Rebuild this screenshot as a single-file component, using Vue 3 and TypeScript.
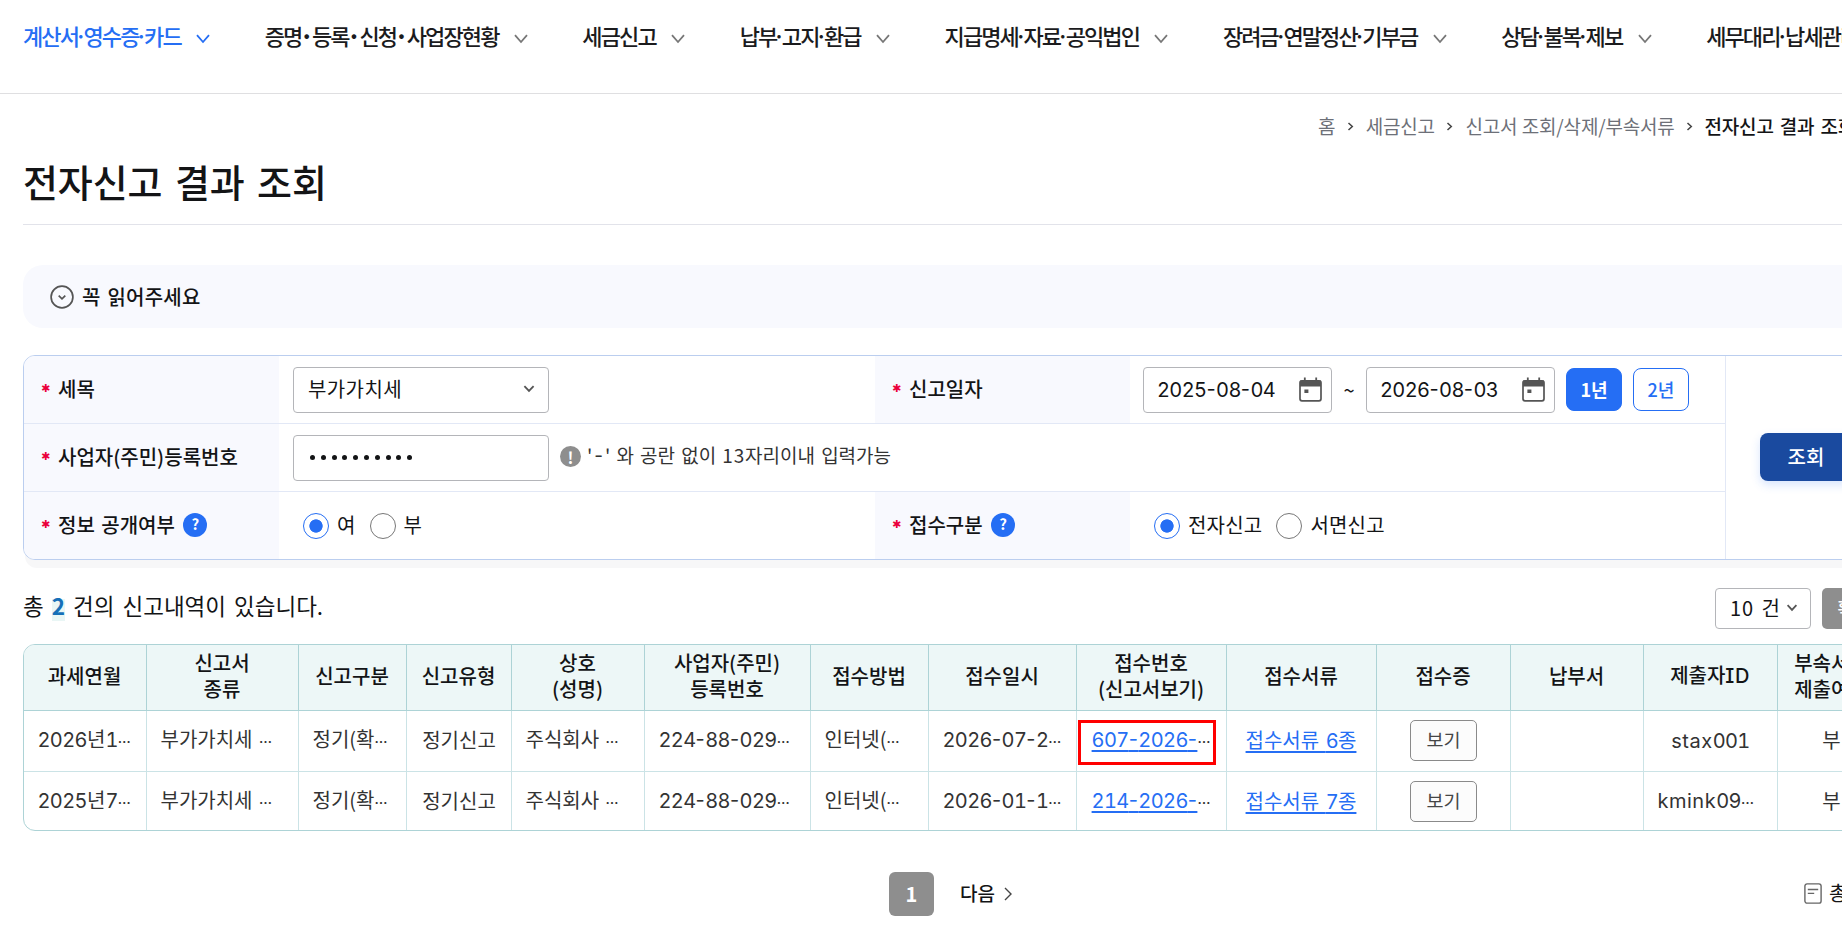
<script setup lang="ts">
import { h } from 'vue'

interface NavItem { label: string; active?: boolean; wide?: boolean }
interface Column { title: string[]; width: number }
interface Cell { text: string; kind?: 'link' | 'button' | 'left'; marked?: boolean }

/* Picks the class of one run of text: each kind has its own face and tracking. */
function runClass(run: string): string {
  if (run === '…') return 'run-more'
  if (run === '·') return 'run-dot'
  if (run === '-') return 'run-latin run-dash'
  if (/^[0-9]/.test(run)) return 'run-latin run-num'
  if (/^[A-Za-z]/.test(run)) return 'run-latin'
  return 'run-ko'
}

const Mixed = (props: { text: string }) =>
  (props.text.match(/…|·|-|[0-9]+|[A-Za-z]+|[^…·0-9A-Za-z\-]+/g) ?? []).map((run) =>
    h('span', { class: runClass(run) }, run),
  )
Mixed.props = ['text']

const nav: NavItem[] = [
  { label: '계산서·영수증·카드', active: true },
  { label: '증명·등록·신청·사업장현황', wide: true },
  { label: '세금신고' },
  { label: '납부·고지·환급' },
  { label: '지급명세·자료·공익법인' },
  { label: '장려금·연말정산·기부금' },
  { label: '상담·불복·제보' },
  { label: '세무대리·납세관리' },
]

const crumbs = ['홈', '세금신고', '신고서 조회/삭제/부속서류', '전자신고 결과 조회']

const columns: Column[] = [
  { title: ['과세연월'], width: 123 },
  { title: ['신고서', '종류'], width: 152 },
  { title: ['신고구분'], width: 108 },
  { title: ['신고유형'], width: 105 },
  { title: ['상호', '(성명)'], width: 133 },
  { title: ['사업자(주민)', '등록번호'], width: 166 },
  { title: ['접수방법'], width: 118 },
  { title: ['접수일시'], width: 148 },
  { title: ['접수번호', '(신고서보기)'], width: 150 },
  { title: ['접수서류'], width: 150 },
  { title: ['접수증'], width: 134 },
  { title: ['납부서'], width: 133 },
  { title: ['제출자ID'], width: 134 },
  { title: ['부속서류', '제출여부'], width: 108 },
]

const rows: Cell[][] = [
  [
    { text: '2026년1…', kind: 'left' }, { text: '부가가치세 …', kind: 'left' }, { text: '정기(확…', kind: 'left' },
    { text: '정기신고' }, { text: '주식회사 …', kind: 'left' }, { text: '224-88-029…', kind: 'left' },
    { text: '인터넷(…', kind: 'left' }, { text: '2026-07-2…', kind: 'left' },
    { text: '607-2026-…', kind: 'link', marked: true }, { text: '접수서류 6종', kind: 'link' },
    { text: '보기', kind: 'button' }, { text: '' }, { text: 'stax001' }, { text: '부' },
  ],
  [
    { text: '2025년7…', kind: 'left' }, { text: '부가가치세 …', kind: 'left' }, { text: '정기(확…', kind: 'left' },
    { text: '정기신고' }, { text: '주식회사 …', kind: 'left' }, { text: '224-88-029…', kind: 'left' },
    { text: '인터넷(…', kind: 'left' }, { text: '2026-01-1…', kind: 'left' },
    { text: '214-2026-…', kind: 'link' }, { text: '접수서류 7종', kind: 'link' },
    { text: '보기', kind: 'button' }, { text: '' }, { text: 'kmink09…', kind: 'left' }, { text: '부' },
  ],
]

const gridColumns = columns.map((c) => `${c.width}px`).join(' ')
const dates = ['2025-08-04', '2026-08-03']
</script>

<template>
  <div class="page">
    <nav class="gnb">
      <a v-for="item in nav" :key="item.label" class="gnb-item" :class="{ active: item.active, wide: item.wide }">
        <span class="gnb-label"><Mixed :text="item.label" /></span>
        <svg class="gnb-chev" width="14" height="10" viewBox="0 0 14 10"><path d="M1 1.2 7 8 13 1.2" /></svg>
      </a>
    </nav>

    <main class="content">
      <div class="crumbs">
        <template v-for="(crumb, i) in crumbs" :key="crumb">
          <svg v-if="i > 0" class="crumb-chev" width="7" height="9" viewBox="0 0 7 9"><path d="M1.5 1 5.3 4.5 1.5 8" /></svg>
          <span :class="{ current: i === crumbs.length - 1 }">{{ crumb }}</span>
        </template>
      </div>
      <h1>전자신고 결과 조회</h1>

      <section class="notice">
        <svg width="24" height="24" viewBox="0 0 24 24"><circle cx="12" cy="12" r="10.9" /><path d="M8.7 10.6 12 13.8 15.3 10.6" /></svg>
        <strong>꼭 읽어주세요</strong>
      </section>

      <section class="panel">
        <div class="fields">
          <div class="row">
            <div class="label"><i>✱</i>세목</div>
            <div class="value">
              <div class="box wide-box">부가가치세<svg class="select-chev" width="12" height="8" viewBox="0 0 12 8"><path d="M1.4 1.2 6 5.9 10.6 1.2" /></svg></div>
            </div>
            <div class="label"><i>✱</i>신고일자</div>
            <div class="value">
              <template v-for="(date, i) in dates" :key="date">
                <span v-if="i > 0" class="tilde">~</span>
                <div class="box date-box">
                  <span><Mixed :text="date" /></span>
                  <svg width="23" height="25" viewBox="0 0 23 25">
                    <path class="cal-pins" d="M5.8 0.5V5M17.2 0.5V5" />
                    <rect class="cal-frame" x="1" y="3.8" width="21" height="20" rx="2" />
                    <path class="cal-fill" d="M1 3.5h21v6H1zM5.4 12.4h4v3.6h-4z" />
                  </svg>
                </div>
              </template>
              <button class="year on">1년</button>
              <button class="year">2년</button>
            </div>
          </div>
          <div class="row single">
            <div class="label"><i>✱</i>사업자(주민)등록번호</div>
            <div class="value">
              <div class="box wide-box dots"><b v-for="n in 10" :key="n"></b></div>
              <span class="info">!</span>
              <span class="hint">'<em>-</em>' 와 공란 없이 <span class="hint-num">13</span>자리이내 입력가능</span>
            </div>
          </div>
          <div class="row">
            <div class="label"><i>✱</i>정보 공개여부<span class="help">?</span></div>
            <div class="value radios">
              <span class="radio on"></span><span class="radio-text">여</span>
              <span class="radio"></span><span class="radio-text">부</span>
            </div>
            <div class="label"><i>✱</i>접수구분<span class="help">?</span></div>
            <div class="value radios">
              <span class="radio on"></span><span class="radio-text">전자신고</span>
              <span class="radio"></span><span class="radio-text">서면신고</span>
            </div>
          </div>
        </div>
        <div class="submit"><button>조회</button></div>
      </section>

      <div class="summary">
        <p>총 <mark>2</mark> 건의 신고내역이 있습니다.</p>
        <div class="tools">
          <div class="page-size"><span>10 건</span><svg class="select-chev" width="12" height="8" viewBox="0 0 12 8"><path d="M1.6 1.2 6 5.9 10.4 1.2" /></svg></div>
          <button class="confirm">확인</button>
        </div>
      </div>

      <section class="table">
        <div class="tr head" :style="{ gridTemplateColumns: gridColumns }">
          <div v-for="col in columns" :key="col.title[0]" class="th">
            <span v-for="line in col.title" :key="line"><Mixed :text="line" /></span>
          </div>
        </div>
        <div v-for="(row, r) in rows" :key="r" class="tr" :style="{ gridTemplateColumns: gridColumns }">
          <div v-for="(cell, c) in row" :key="c" class="td" :class="[cell.kind, { marked: cell.marked }]">
            <button v-if="cell.kind === 'button'" class="view">{{ cell.text }}</button>
            <span v-else><Mixed :text="cell.text" /></span>
          </div>
        </div>
      </section>

      <footer class="pager">
        <span class="page-no">1</span>
        <a class="next">다음<svg width="8" height="14" viewBox="0 0 8 14"><path d="M1 1 7 7 1 13" /></svg></a>
        <div class="total">
          <svg width="18" height="21" viewBox="0 0 18 21"><rect x="0.9" y="0.9" width="16.2" height="19.2" rx="2.2" /><path d="M3.8 6.5h10.4M3.8 10.4h6.4" /></svg>
          <span>총</span>
        </div>
      </footer>
    </main>
  </div>
</template>

<style>
body { margin: 0; background: #fff; }
.run-latin { font-family: Inter, "Noto Sans", sans-serif; font-feature-settings: "case", "cv08"; letter-spacing: 0.5px; }
.run-num { font-feature-settings: "tnum"; letter-spacing: -0.6px; }
.run-dash { letter-spacing: 0.4px; }
.run-dot { display: inline-flex; justify-content: center; width: 5.5px; letter-spacing: 0; }
.run-more { display: inline-flex; justify-content: center; width: 13px; font-size: 13px; font-weight: 700; letter-spacing: 0; color: #333; }
</style>

<style scoped>
.page {
  width: 1842px;
  height: 947px;
  overflow: hidden;
  color: #131416;
  font-family: "Noto Sans CJK KR", "Noto Sans", sans-serif;
  font-size: 20px;
  line-height: 26px;
  word-spacing: 2px;
  white-space: nowrap;
}
.page * { box-sizing: border-box; }
svg { flex: none; fill: none; stroke: #555; stroke-width: 1.8; }
button { padding: 0; border: 0; font: inherit; }

.gnb { display: flex; gap: 54.6px; height: 94px; padding: 21px 0 0 23px; border-bottom: 1px solid #dfdfe1; }
.gnb-item { display: flex; flex: none; align-items: flex-start; gap: 15.3px; height: 28px; font-size: 22px; font-weight: 500; line-height: 28px; letter-spacing: -1.9px; color: #1b1b1d; }
.gnb-item.active { color: #256ef4; }
.gnb-item.wide :deep(.run-dot) { width: 10.7px; font-weight: 900; }
.gnb-label { display: flex; }
.gnb-chev { margin-top: 13px; stroke: #777; }
.active .gnb-chev { stroke: #256ef4; }

.content { padding-left: 23px; }
.crumbs { display: flex; align-items: center; gap: 12px; height: 64px; margin-bottom: 2px; padding-left: 1295px; font-size: 19px; word-spacing: 0.5px; letter-spacing: -0.2px; color: #6d7078; }
.crumbs .current { margin-left: -0.5px; font-weight: 500; word-spacing: 2px; color: #131416; }
.crumb-chev { margin-left: -0.5px; stroke: #444; stroke-width: 1.5; }
h1 { height: 65px; margin: 0; border-bottom: 1px solid #e2e3ea; font-size: 38px; font-weight: 500; line-height: 42px; letter-spacing: -0.1px; word-spacing: 4px; }

.notice { display: flex; align-items: center; gap: 8px; width: 1900px; height: 63px; margin-top: 40px; padding-left: 27px; border-radius: 20px; background: #f8f9fe; }
.notice strong { padding-top: 1px; font-weight: 500; letter-spacing: 0.25px; }
.notice svg { stroke-width: 1.7; }

.panel { display: flex; width: 1900px; height: 205px; margin-top: 27px; border: 1px solid #bbceef; border-radius: 12px; background: #fff; box-shadow: 2px 8px 0 #f7f7f8; }
.fields { width: 1702px; border-right: 1px solid #e2e8f6; }
.row { display: grid; grid-template-columns: 255px 596px 255px 1fr; height: 68px; border-bottom: 1px solid #e2e8f6; }
.row.single { grid-template-columns: 255px 1fr; }
.row:last-child { height: 67px; border-bottom: 0; }
.row:first-child .label:first-child { border-top-left-radius: 11px; }
.row:last-child .label:first-child { border-bottom-left-radius: 11px; }
.label { display: flex; align-items: center; padding: 0 0 2px 17px; background: #f8f9fe; font-weight: 500; }
.label i { width: 17px; padding-top: 1px; font-family: "DejaVu Sans", sans-serif; font-size: 11px; font-style: normal; color: #eb003b; }
.value { display: flex; align-items: center; padding-left: 14px; }
.box { display: flex; align-items: center; height: 46px; padding: 0 0 1px 14px; border: 1px solid #b4b5b9; border-radius: 4px; }
.wide-box { justify-content: space-between; width: 256px; padding-right: 13px; letter-spacing: 0.4px; }
.select-chev { stroke-width: 1.8; }
.date-box { justify-content: space-between; width: 189px; padding: 0 9px 0 13px; }
.row:first-child .value:last-child { padding-left: 13px; }
.tilde { width: 34px; text-align: center; }
.cal-pins { stroke: #555; stroke-width: 1.8; }
.cal-frame { stroke: #555; stroke-width: 1.7; }
.cal-fill { fill: #555; stroke: none; }
.year { width: 56px; height: 43px; margin: 0 0 0 11px; padding-bottom: 2px; border: 1px solid #256ef4; border-radius: 8px; background: #fff; color: #256ef4; font-size: 18px; font-weight: 500; }
.year.on { background: #256ef4; color: #fff; font-weight: 700; }
.dots { justify-content: flex-start; gap: 5.8px; padding-left: 16px; }
.dots b { width: 5px; height: 5px; border-radius: 50%; background: #131416; }
.info { display: flex; align-items: center; justify-content: center; width: 21px; height: 21px; margin: -2px 6px 0 11px; border-radius: 50%; background: #8e8e8e; color: #fff; font-size: 16px; font-weight: 700; }
.hint { margin-top: -4px; font-size: 19px; word-spacing: 1.9px; color: #333; }
.hint em { margin: 0 2px; font-family: Inter, sans-serif; font-feature-settings: "case"; font-style: normal; }
.hint-num { letter-spacing: 0.8px; }
.help { display: flex; align-items: center; justify-content: center; width: 24px; height: 24px; margin-left: 8.5px; padding-bottom: 1px; border-radius: 50%; background: #256ef4; color: #fff; font-size: 15px; font-weight: 700; }
.radios { padding: 1px 0 0 24px; }
.radio { width: 26px; height: 26px; border: 1px solid #777; border-radius: 50%; }
.radio.on { border-color: #256ef4; background: radial-gradient(circle, #256ef4 6.3px, #fff 7px); }
.radio-text { margin: -2px 14px 0 8px; letter-spacing: 0.2px; }
.submit { display: flex; align-items: center; padding: 0 0 1px 34px; }
.submit button { width: 92px; height: 48px; padding-bottom: 1px; border-radius: 8px; background: #1a4a9f; box-shadow: 0 4px 10px rgba(37, 110, 244, 0.18); color: #fff; font-weight: 500; }

.summary { display: flex; justify-content: space-between; height: 41px; margin-top: 28px; }
.summary p { margin: 0; font-size: 22.5px; line-height: 35px; letter-spacing: 0; word-spacing: 3px; }
.summary mark { background: linear-gradient(transparent 10px, #e9f6f5 10px); color: #1670b8; font-weight: 700; }
.tools { display: flex; flex: none; gap: 11px; width: 127px; }
.page-size { display: flex; flex: none; align-items: center; gap: 5px; width: 96px; height: 41px; padding: 0 0 2px 14px; border: 1px solid #b4b5b9; border-radius: 4px; }
.page-size span { letter-spacing: 0.9px; }
.confirm { flex: none; width: 64px; padding-bottom: 4px; border-radius: 5px; background: #8e8e8e; color: #fff; font-size: 18px; font-weight: 500; }

.table { width: 1864px; height: 187px; margin-top: 15px; overflow: hidden; border: 1px solid #add3d6; border-radius: 12px; }
.tr { display: grid; height: 61px; border-bottom: 1px solid #cbe3e6; color: #333; }
.tr.head { height: 66px; border-color: #add3d6; background: #edf7f7; color: #131416; font-weight: 500; }
.th { display: flex; flex-direction: column; align-items: center; justify-content: center; padding: 0 1px 4px 0; border-right: 1px solid #add3d6; }
.td { display: flex; align-items: center; justify-content: center; padding-bottom: 2px; border-right: 1px solid #cbe3e6; }
.td.left { justify-content: flex-start; padding-left: 13.5px; }
.td.link { padding-right: 1px; color: #256ef4; }
.td.link :deep(.run-latin), .td.link :deep(.run-ko) { text-decoration: underline; text-decoration-thickness: 2px; text-underline-offset: 3px; text-decoration-skip-ink: none; }
.td.marked { position: relative; }
.td.marked::after { content: ""; position: absolute; left: 1px; top: 9px; width: 132px; height: 39px; border: 3px solid #f00; }
.view { width: 67px; height: 41px; padding-bottom: 3px; border: 1px solid #8a8a8a; border-radius: 5px; background: #fcfcfc; color: #464646; font-size: 18.5px; }

.pager { display: flex; align-items: center; height: 44px; margin-top: 41px; padding-left: 866px; }
.page-no { flex: none; width: 45px; height: 44px; border-radius: 6px; background: #8e8e8e; color: #fff; font-weight: 700; line-height: 43px; text-align: center; }
.next { display: flex; flex: none; align-items: center; gap: 9px; margin: -3px 0 0 26px; font-size: 19px; font-weight: 500; }
.next svg { margin-top: 2px; stroke: #444; stroke-width: 1.4; }
.total { display: flex; flex: none; align-items: center; gap: 7px; margin: -3px 0 0 792px; }
.total svg { margin-top: 2px; stroke: #666; stroke-width: 1.4; }
</style>
